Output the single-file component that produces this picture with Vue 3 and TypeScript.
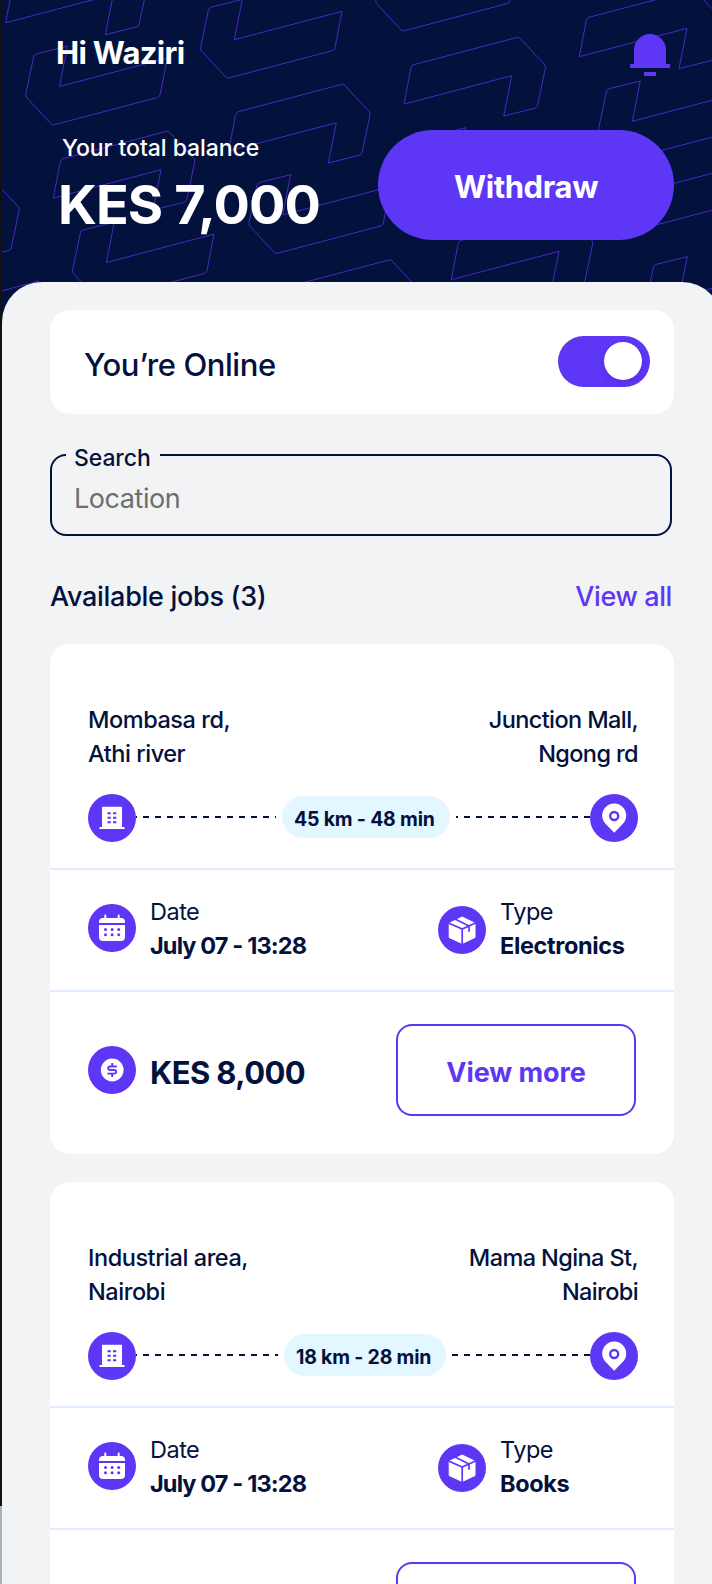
<script setup lang="ts">
interface Job {
  from: string[]
  to: string[]
  trip: string
  tripClass: string
  date: string
  type: string
  price?: string
  action?: string
}

const jobs: Job[] = [
  { from: ['Mombasa rd,', 'Athi river'], to: ['Junction Mall,', 'Ngong rd'], trip: '45 km - 48 min', tripClass: 'long', date: 'July 07 - 13:28', type: 'Electronics', price: 'KES 8,000', action: 'View more' },
  { from: ['Industrial area,', 'Nairobi'], to: ['Mama Ngina St,', 'Nairobi'], trip: '18 km - 28 min', tripClass: 'short', date: 'July 07 - 13:28', type: 'Books' },
]

// Inner corners of the header's interlocking outlines
const hooks: [number, number][] = [
  [234.3, 39.7], [59.5, 86.5], [409.5, -7.5], [106.3, 262.5], [282.7, 215],
  [458, 168], [632.3, 121.3], [679.3, 297], [-69, 309.5],
]
const turnedHooks: [number, number][] = [
  [511.7, 75.7], [687, 28.3], [336.3, 122.7], [161, 169.7], [113.3, -5.6],
  [559, 251.3], [-14.6, 218], [383.6, 298.3], [734.4, 204.3],
]
</script>

<template>
  <div class="screen">
    <div class="edge"></div>
    <header class="top">
      <svg class="pattern" width="712" height="330" viewBox="0 0 712 330" aria-hidden="true">
        <defs>
          <path id="hook" d="M8-40.3 0 0l107.7-28.4L100.7 8Q100 10.400 98 11L-5 38.200Q-7 38.600-8.500 37.300L-33 11Q-34 9.500-33.700 7.500L-25.900-29.500Q-25.300-32-23-32.600Z" />
        </defs>
        <g fill="none" stroke="#4629c4" stroke-width="1">
          <use v-for="(p, i) in hooks" :key="'h' + i" href="#hook" :transform="`translate(${p[0]} ${p[1]})`" />
          <use v-for="(p, i) in turnedHooks" :key="'t' + i" href="#hook" :transform="`translate(${p[0]} ${p[1]}) rotate(180)`" />
        </g>
      </svg>
      <div class="greet">
        <span class="hello">Hi Waziri</span>
        <svg class="bell" width="40" height="42" viewBox="0 0 40 42" fill="#5e36f6">
          <path d="M4 30V16a16 16 0 0 1 32 0v14h4v4H0v-4zM14 38h12v4H14z" />
        </svg>
      </div>
      <div class="wallet">
        <div>
          <div class="caption">Your total balance</div>
          <div class="balance">KES 7,000</div>
        </div>
        <button class="withdraw">Withdraw</button>
      </div>
    </header>

    <main class="sheet">
      <section class="online">
        <span class="online-text">You’re Online</span>
        <span class="toggle"><i></i></span>
      </section>

      <fieldset class="search">
        <legend>Search</legend>
        <span class="location">Location</span>
      </fieldset>

      <div class="heading">
        <span class="available">Available jobs (3)</span>
        <a class="all">View all</a>
      </div>

      <article v-for="job in jobs" :key="job.type" class="card">
        <div class="route">
          <div class="places">
            <div><div v-for="l in job.from" :key="l">{{ l }}</div></div>
            <div class="dest"><div v-for="l in job.to" :key="l">{{ l }}</div></div>
          </div>
          <div class="track" :class="job.tripClass">
            <svg class="disc" viewBox="0 0 48 48">
              <circle cx="24" cy="24" r="24" />
              <path fill="#fff" d="M14 12.700h20v20.300h2.500v2H11.500v-2H14z" />
              <path d="M19.500 18.300h3.300v2h-3.300zm5.500 0h3.300v2H25zm-5.500 4.500h3.300v2h-3.300zm5.500 0h3.300v2H25zm-5.500 4.500h3.300v2h-3.300zm5.500 0h3.300v2H25z" />
            </svg>
            <svg class="dash left" height="2"><line x1="0" y1="1" x2="100%" y2="1" /></svg>
            <span class="pill">{{ job.trip }}</span>
            <svg class="dash right" height="2"><line x1="0" y1="1" x2="100%" y2="1" /></svg>
            <svg class="disc" viewBox="0 0 48 48">
              <circle cx="24" cy="24" r="24" />
              <path fill="#fff" d="M24.200 38.700 15.500 29.800A12 12 0 1 1 32.900 29.800Z" />
              <circle cx="24.200" cy="22" r="4" fill="#fff" stroke="#5e36f6" stroke-width="2.400" />
            </svg>
          </div>
        </div>

        <div class="details">
          <div class="detail">
            <svg class="disc" viewBox="0 0 48 48">
              <circle cx="24" cy="24" r="24" />
              <path fill="#fff" d="M11 19v-1q0-4 4-4h1.300v-2.500a1 1 0 0 1 2 0V14h11.400v-2.500a1 1 0 0 1 2 0V14H33q4 0 4 4v1zM11 21h26v12q0 4-4 4H15q-4 0-4-4z" />
              <g>
                <circle v-for="n in 6" :key="n" :cx="17.500 + ((n - 1) % 3) * 6.600" :cy="n < 4 ? 25.400 : 30.700" r="1.500" />
              </g>
            </svg>
            <div>
              <div class="label">Date</div>
              <div class="value date">{{ job.date }}</div>
            </div>
          </div>
          <div class="detail type">
            <svg class="disc" viewBox="0 0 48 48">
              <circle cx="24" cy="24" r="24" />
              <path fill="#fff" stroke="#fff" stroke-linejoin="round" d="m24.200 11 12.800 6.300v14.200L24.200 37.500 11.200 31.500V17.300z" />
              <path fill="none" stroke="#5e36f6" stroke-width="1.700" d="m10 16.800 14.200 6.300L38 16.800M24.200 23v15.500M17 13l14 7v5.800" />
            </svg>
            <div>
              <div class="label">Type</div>
              <div class="value">{{ job.type }}</div>
            </div>
          </div>
        </div>

        <div class="pay">
          <svg class="disc" viewBox="0 0 48 48">
            <circle cx="24" cy="24" r="24" />
            <circle cx="24.200" cy="24" r="11.400" fill="#fff" />
            <path fill="none" stroke="#5e36f6" stroke-width="1.900" d="M24.200 17v3.200m0 7.600V31M28.800 20.500h-6.600q-2 0-2 1.800 0 1.700 2 1.700h4q2 0 2 1.800t-2 1.800h-6.800" />
          </svg>
          <span class="price">{{ job.price }}</span>
          <button class="more">{{ job.action }}</button>
        </div>
      </article>
    </main>
  </div>
</template>

<style>
html, body { overflow: hidden; background: #03123c; }
</style>

<style scoped>
.screen {
  position: relative;
  width: 712px;
  height: 1584px;
  overflow: hidden;
  background: #03123c;
  color: #03123c;
  font-family: Inter, "Liberation Sans", sans-serif;
  white-space: nowrap;
}
.screen * { box-sizing: border-box; }
.edge {
  position: absolute;
  z-index: 2;
  left: 0;
  top: 0;
  width: 2px;
  height: 1584px;
  background: linear-gradient(#111 1506px, #a8b2bc 1506px);
}
.top { position: relative; height: 282px; padding: 34px 38px 0 56px; color: #fff; }
.pattern { position: absolute; left: 0; top: 0; }
.greet { position: relative; display: flex; justify-content: space-between; height: 96px; padding-right: 4px; }
.hello { font-size: 31px; font-weight: 700; line-height: 38px; letter-spacing: -0.7px; }
.bell { display: block; }
.wallet { position: relative; display: flex; justify-content: space-between; }
.caption { margin-left: 6px; font-size: 23px; font-weight: 500; line-height: 36px; letter-spacing: -0.05px; }
.balance { padding: 9px 0 0 2px; font-size: 54px; font-weight: 700; line-height: 60px; letter-spacing: -0.9px; }
button { font-family: inherit; padding: 0; }
.withdraw { width: 296px; height: 110px; border: 0; border-radius: 55px; background: #5e36f6; color: #fff; font-size: 31px; font-weight: 700; letter-spacing: -0.4px; padding-top: 3px; }
.sheet { position: relative; margin-left: 2px; width: 720px; height: 1302px; padding: 28px 48px 0; border-radius: 40px 40px 0 0; background: #f2f3f5; }
.online { display: flex; align-items: center; justify-content: space-between; width: 624px; height: 104px; padding: 0 24px 0 34px; border-radius: 20px; background: #fff; }
.online-text { padding-top: 5px; font-size: 31px; font-weight: 500; letter-spacing: -0.43px; }
.toggle { width: 92px; height: 51px; margin-bottom: 1px; padding: 6px 8px 0 0; border-radius: 26px; background: #5e36f6; }
.toggle i { display: block; width: 38px; height: 38px; margin-left: auto; border-radius: 50%; background: #fff; box-shadow: 0 3px 6px rgba(30, 20, 90, .15); }
.search { width: 622px; min-width: 0; height: 90px; margin: 32px 0 0; padding: 0 22px; border: 2px solid #03123c; border-radius: 16px; }
.search legend { width: 94px; height: 18px; margin-left: -8px; padding: 0 0 0 8px; font-size: 23px; font-weight: 500; line-height: 24px; letter-spacing: -0.1px; }
.location { display: block; margin-top: 17px; color: #6e6e6e; font-size: 27px; font-weight: 400; line-height: 36px; letter-spacing: -0.45px; }
.heading { display: flex; justify-content: space-between; width: 622px; height: 108px; padding-top: 42px; font-size: 27px; font-weight: 500; line-height: 37px; }
.available { letter-spacing: -0.3px; }
.all { color: #5e36f6; letter-spacing: -0.4px; }
.card { width: 624px; height: 510px; margin-bottom: 28px; border-radius: 20px; background: #fff; }
.route { height: 226px; padding: 59px 36px 0 38px; border-bottom: 2px solid #e1ecfc; }
.places { display: flex; justify-content: space-between; height: 91px; font-size: 23.5px; font-weight: 500; line-height: 34px; letter-spacing: -0.45px; }
.dest { text-align: right; letter-spacing: -0.6px; }
.track { display: flex; width: 550px; }
.disc { flex: none; display: block; width: 48px; height: 48px; fill: #5e36f6; }
.dash { min-width: 0; margin-top: 22px; stroke: #03123c; stroke-width: 1.800; stroke-dasharray: 6 6; }
.dash.left { flex: none; width: 140px; margin-right: 6px; stroke-dashoffset: 5; }
.dash.right { flex: 1; margin-left: 6px; }
.long .dash.right { stroke-dashoffset: 4; }
.short .dash.left { width: 142px; }
.pill { flex: none; width: 168px; height: 42px; margin-top: 2px; padding-left: 12px; border-radius: 21px; background: #e2f7ff; font-size: 19.5px; font-weight: 700; line-height: 46px; letter-spacing: -0.2px; }
.short .pill { width: 162px; }
.details { display: flex; height: 122px; padding: 25px 0 0 38px; border-bottom: 2px solid #e1ecfc; }
.detail { flex: none; display: flex; width: 350px; }
.detail.type { width: 200px; }
.detail .disc { margin: 9px 14px 0 0; }
.type .disc { margin-top: 11px; }
.label, .value { font-size: 23.5px; line-height: 34px; letter-spacing: -0.35px; }
.label { font-weight: 400; letter-spacing: -0.5px; }
.value { font-weight: 700; }
.value.date { letter-spacing: -0.87px; }
.pay { display: flex; padding: 32px 38px 0; }
.pay .disc { margin-top: 22px; }
.price { flex: 1; margin-left: 14px; padding-top: 30px; font-size: 31px; font-weight: 700; line-height: 38px; letter-spacing: -0.6px; }
.more { width: 240px; height: 92px; padding-top: 5px; border: 2px solid #5e36f6; border-radius: 16px; background: #fff; color: #5e36f6; font-size: 27px; font-weight: 700; letter-spacing: -0.1px; }
</style>
